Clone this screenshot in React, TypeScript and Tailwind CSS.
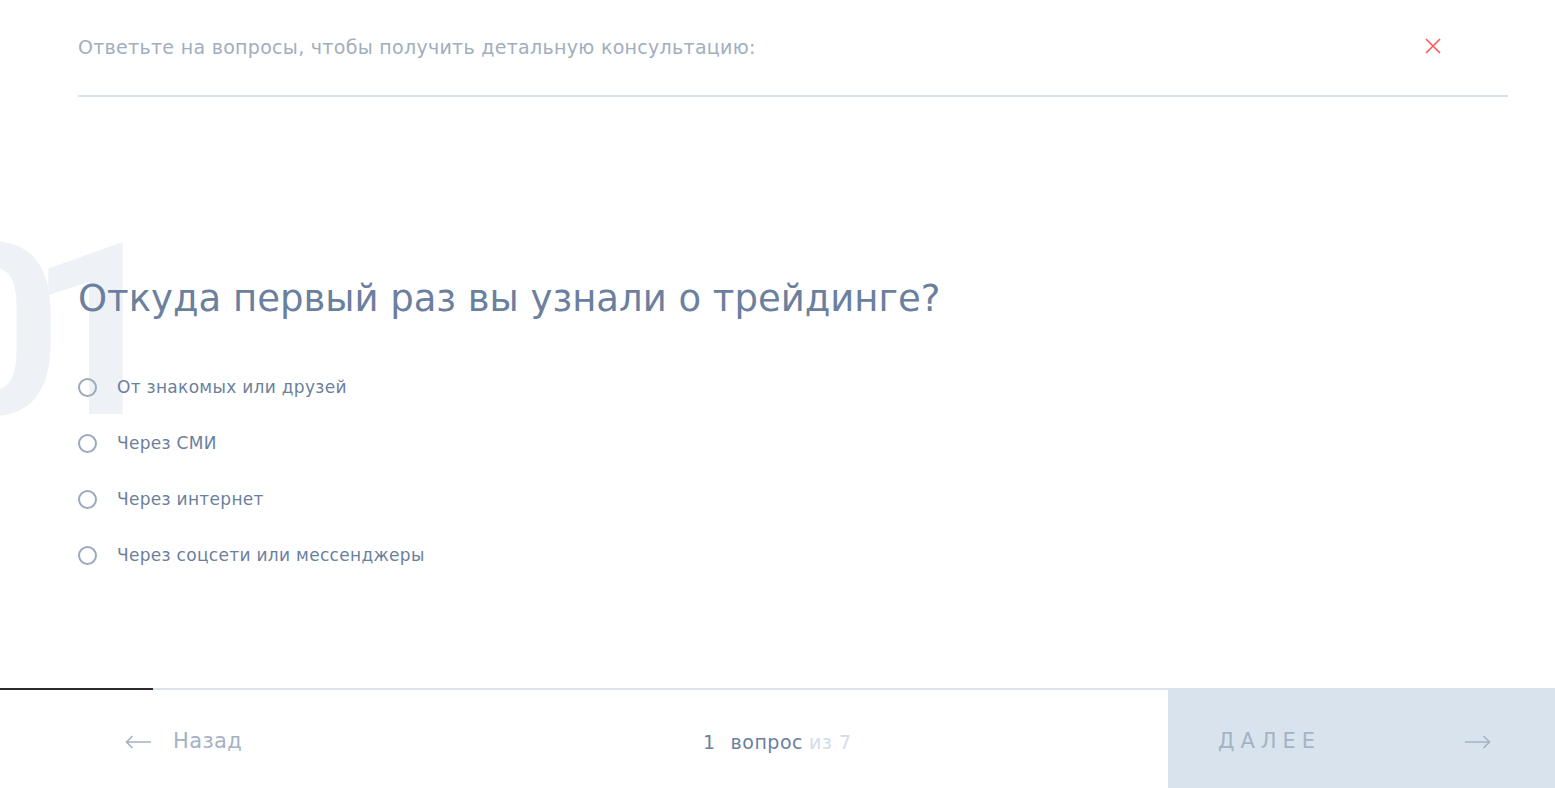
import { useState } from "react";

const options = [
  "От знакомых или друзей",
  "Через СМИ",
  "Через интернет",
  "Через соцсети или мессенджеры",
];

function Radio({ checked }: { checked: boolean }) {
  return (
    <span className="flex size-[19px] shrink-0 items-center justify-center rounded-full border-2 border-[#9daabb]">
      {checked ? <span className="size-[9px] rounded-full bg-[#6b7f9e]" /> : null}
    </span>
  );
}

function Arrow({ left }: { left?: boolean }) {
  return (
    <svg width="26" height="14" viewBox="0 0 26 14" fill="none" stroke="currentColor" strokeWidth="1.6" className={left ? "rotate-180" : ""}>
      <path d="M0 7H24.5M18.5 1L24.5 7L18.5 13" />
    </svg>
  );
}

export default function App() {
  const [picked, setPicked] = useState<number | null>(null);

  return (
    <div className="relative flex h-[788px] w-full flex-col overflow-hidden bg-white font-['DejaVu_Sans',sans-serif]">
      {/* watermark number */}
      <div className="pointer-events-none absolute left-[-76px] top-[212px] select-none font-['Roboto',sans-serif] text-[240px] font-bold leading-none tracking-[-33px] text-[#eef2f7]">
        01
      </div>

      <header className="relative ml-[78px] mr-[47px] flex h-[97px] items-center justify-between border-b-2 border-[#d9e3ee]">
        <p className="text-[19px] tracking-[0.3px] text-[#a1aebe]">
          Ответьте на вопросы, чтобы получить детальную консультацию:
        </p>
        <button className="mb-[4px] mr-[67px] text-[#ff5757]" aria-label="Закрыть">
          <svg width="16" height="16" viewBox="0 0 16 16" fill="none" stroke="currentColor" strokeWidth="1.6">
            <path d="M1 1L15 15M15 1L1 15" />
          </svg>
        </button>
      </header>

      <main className="relative flex flex-1 flex-col pl-[78px] pt-[180px]">
        <h1 className="text-[37px] leading-[44px] text-[#6b7f9e]">
          Откуда первый раз вы узнали о трейдинге?
        </h1>
        <ul className="mt-[54px] flex flex-col gap-[31px]">
          {options.map((o, i) => (
            <li key={o}>
              <label
                className="flex cursor-pointer items-center gap-[20px] text-[17px] leading-[25px] tracking-[0.3px] text-[#6b7f9e]"
                onClick={() => setPicked(i)}
              >
                <Radio checked={picked === i} />
                <span>{o}</span>
              </label>
            </li>
          ))}
        </ul>
      </main>

      <footer className="relative flex h-[100px] shrink-0 border-t-2 border-[#dbe4ed]">
        <div className="absolute left-0 top-[-2px] h-[2px] w-[153px] bg-[#2f2a2d]" />
        <button className="flex w-[560px] items-center gap-[22px] pl-[125px] pt-[6px] text-[21px] tracking-[0.4px] text-[#a4b2c3]">
          <Arrow left />
          Назад
        </button>
        <div className="flex flex-1 items-center pl-[143px] pt-[6px] text-[19px] tracking-[0.5px]">
          <span className="text-[#6b7f9e]">1</span>
          <span className="ml-[15px] text-[#6b7f9e]">вопрос</span>
          <span className="ml-[6px] text-[#d3dde8]">из 7</span>
        </div>
        <button className="-mt-[2px] flex w-[387px] items-center justify-between bg-[#d9e3ed] pl-[50px] pr-[64px] pt-[8px] text-[21px] tracking-[6px] text-[#a4b3c4]">
          ДАЛЕЕ
          <Arrow />
        </button>
      </footer>
    </div>
  );
}
